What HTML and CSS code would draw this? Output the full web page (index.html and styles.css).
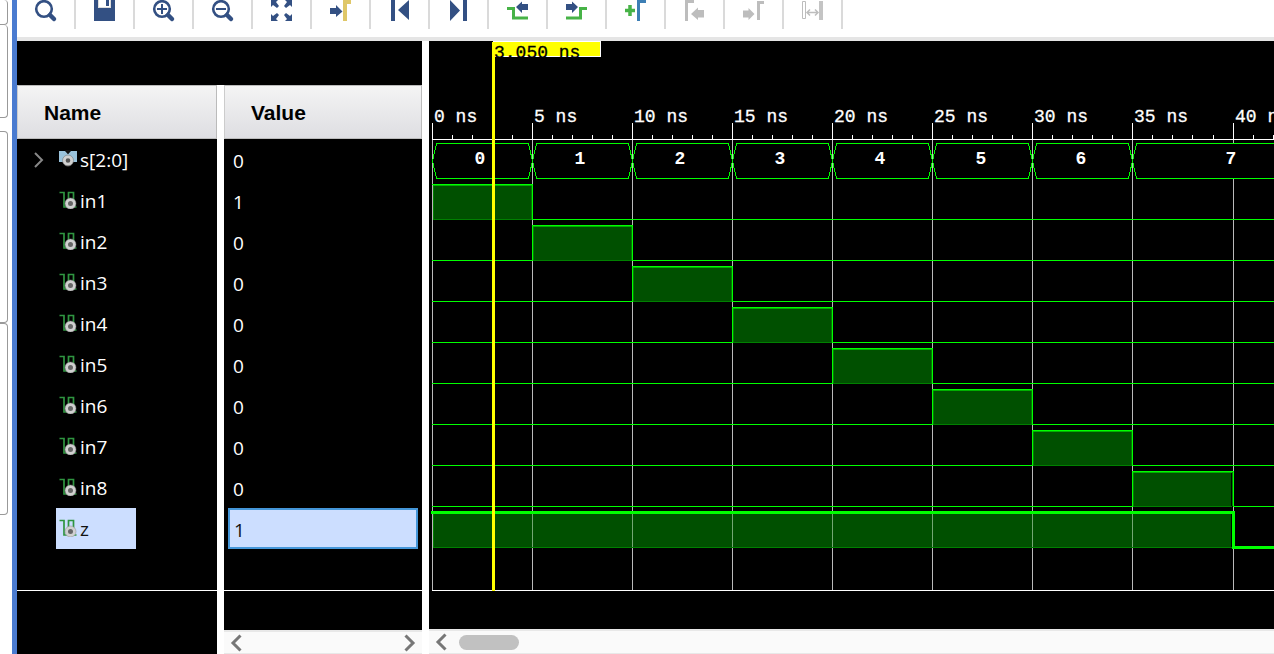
FILE: index.html
```html
<!DOCTYPE html>
<html lang="en">
<head>
<meta charset="utf-8">
<title>Waveform viewer</title>
<link rel="stylesheet" href="styles.css">
</head>
<body>
<svg class="defs" aria-hidden="true">
  <symbol id="bit" viewBox="0 0 18 18">
    <path d="M.5 1.500H5v14.500h4.500v-14.500h5v14.500h3" fill="none" stroke="#2f9540" stroke-width="1.700"/>
    <circle cx="11.500" cy="12.500" r="4" fill="#666" stroke="#d0d0d0" stroke-width="3"/>
    <circle cx="11.500" cy="12.500" r="5.500" fill="none" stroke="#888" stroke-width=".5"/>
  </symbol>
  <symbol id="bus" viewBox="0 0 18 18">
    <path d="M0 1h6l3 3 3-3h6v11H0z" fill="#9ac3dc"/>
    <path d="M6 0h6l-3 4z" fill="#111"/>
    <circle cx="9" cy="10.500" r="3.800" fill="#555" stroke="#d0d0d0" stroke-width="3"/>
    <circle cx="9" cy="10.500" r="5.500" fill="none" stroke="#888" stroke-width=".7"/>
  </symbol>
  <symbol id="left" viewBox="0 0 12 18"><path d="M10.500 1.500L3 9l7.500 7.500" fill="none" stroke="#777" stroke-width="3"/></symbol>
  <symbol id="right" viewBox="0 0 12 18"><path d="M1.500 1.500L9 9l-7.500 7.500" fill="none" stroke="#777" stroke-width="3"/></symbol>
</svg>
<div class="app">
  <aside class="dock">
    <div class="tab tab-first"></div>
    <div class="tab tab-short"></div>
    <div class="tab tab-group"></div>
    <div class="tab"></div>
  </aside>
  <main class="viewer">
    <div class="toolbar" role="toolbar">
      <button class="tool" aria-label="Search"><svg viewBox="0 0 57 29"><circle cx="27" cy="9" r="7.800" fill="none" stroke="#335083" stroke-width="2.600"/><path d="M33 15l4 4" stroke="#335083" stroke-width="4.500" stroke-linecap="round"/></svg></button>
      <button class="tool" aria-label="Save"><svg viewBox="0 0 57 29"><path d="M18 0h21v21H18z" fill="#335083"/><path d="M22 0h13v8H22z" fill="#ddd"/><path d="M23 0h11v7H23z" fill="#fff"/><path d="M30 0h3v6h-3z" fill="#335083"/></svg></button>
      <button class="tool" aria-label="Zoom in"><svg viewBox="0 0 57 29"><circle cx="27" cy="9" r="7.800" fill="none" stroke="#335083" stroke-width="2.600"/><path d="M33 15l4 4" stroke="#335083" stroke-width="4.500" stroke-linecap="round"/><path d="M22 9h10M27 4v10" stroke="#335083" stroke-width="2"/></svg></button>
      <button class="tool" aria-label="Zoom out"><svg viewBox="0 0 57 29"><circle cx="27" cy="9" r="7.800" fill="none" stroke="#335083" stroke-width="2.600"/><path d="M33 15l4 4" stroke="#335083" stroke-width="4.500" stroke-linecap="round"/><path d="M22 9h10" stroke="#335083" stroke-width="2"/></svg></button>
      <button class="tool" aria-label="Zoom fit"><svg viewBox="0 0 57 29"><path d="M18 0h7l-2 2 3 4-2 2-4-3-2 2zM39 0h-7l2 2-3 4 2 2 4-3 2 2zM18 21h7l-2-2 3-4-2-2-4 3-2-2zM39 21h-7l2-2-3-4 2-2 4 3 2-2z" fill="#335083"/></svg></button>
      <button class="tool" aria-label="Go to cursor"><svg viewBox="0 0 57 29"><path d="M18 8h6V5l6.500 6.500L24 17v-3h-6z" fill="#335083"/><path d="M31 0h8v4h-4v17h-4z" fill="#dfc768"/></svg></button>
      <button class="tool" aria-label="Go to start"><svg viewBox="0 0 57 29"><path d="M20 0h4v21h-4zM38 0v20L27 10z" fill="#335083"/></svg></button>
      <button class="tool" aria-label="Go to end"><svg viewBox="0 0 57 29"><path d="M33 0h4v21h-4zM20 0v21l10-10.500z" fill="#335083"/></svg></button>
      <button class="tool" aria-label="Previous transition"><svg viewBox="0 0 57 29"><path d="M18 8.500h6.500V18H39" fill="none" stroke="#47b347" stroke-width="3"/><path d="M39 4h-6V1.500L27 7l6 6v-3h6z" fill="#335083"/></svg></button>
      <button class="tool" aria-label="Next transition"><svg viewBox="0 0 57 29"><path d="M18 18h14.500V8.500H39" fill="none" stroke="#47b347" stroke-width="3"/><path d="M18 4h6V1.500L30 7l-6 6v-3h-6z" fill="#335083"/></svg></button>
      <button class="tool" aria-label="Add marker"><svg viewBox="0 0 57 29"><path d="M18 10.500h10M23 5v11" stroke="#47b347" stroke-width="3.500"/><path d="M30 0h9v3h-6v18h-3z" fill="#3d7fb5"/></svg></button>
      <button class="tool" aria-label="Previous marker" disabled><svg viewBox="0 0 57 29"><path d="M19 0h9v3h-6v18h-3zM38 10h-6V7.500L25 14l7 6v-2.500h6z" fill="#bdbdbd"/></svg></button>
      <button class="tool" aria-label="Next marker" disabled><svg viewBox="0 0 57 29"><path d="M32 1h7v3h-4v16h-3zM18 10.500h5.500V8l6 6-6 6v-2.500H18z" fill="#bdbdbd"/></svg></button>
      <button class="tool" aria-label="Swap cursors" disabled><svg viewBox="0 0 57 29"><path d="M18.500 1.500h3v17h-3z" fill="none" stroke="#bdbdbd"/><path d="M35 1h4v19h-4z" fill="#c4c4c4"/><path d="M23 12.500h11M26 9.500l-3 3 3 3M31 9.500l3 3-3 3" fill="none" stroke="#bdbdbd" stroke-width="1.500"/></svg></button>
    </div>
    <div class="panes">
      <section class="pane names">
        <div class="spacer"></div>
        <table class="signals">
          <thead><tr><th scope="col">Name</th></tr></thead>
          <tbody>
            <tr><td><div class="signal"><button class="expand" aria-label="Expand s"><svg viewBox="0 0 10 16"><path d="M1 1l7 7-7 7" fill="none" stroke="#888" stroke-width="2"/></svg></button><span class="tag"><svg class="kind"><use href="#bus"/></svg>s[2:0]</span></div></td></tr>
            <tr><td><div class="signal"><span class="tag"><svg class="kind"><use href="#bit"/></svg>in1</span></div></td></tr>
            <tr><td><div class="signal"><span class="tag"><svg class="kind"><use href="#bit"/></svg>in2</span></div></td></tr>
            <tr><td><div class="signal"><span class="tag"><svg class="kind"><use href="#bit"/></svg>in3</span></div></td></tr>
            <tr><td><div class="signal"><span class="tag"><svg class="kind"><use href="#bit"/></svg>in4</span></div></td></tr>
            <tr><td><div class="signal"><span class="tag"><svg class="kind"><use href="#bit"/></svg>in5</span></div></td></tr>
            <tr><td><div class="signal"><span class="tag"><svg class="kind"><use href="#bit"/></svg>in6</span></div></td></tr>
            <tr><td><div class="signal"><span class="tag"><svg class="kind"><use href="#bit"/></svg>in7</span></div></td></tr>
            <tr><td><div class="signal"><span class="tag"><svg class="kind"><use href="#bit"/></svg>in8</span></div></td></tr>
            <tr><td><div class="signal"><span class="tag selected"><svg class="kind"><use href="#bit"/></svg>z</span></div></td></tr>
          </tbody>
        </table>
        <div class="rule"></div>
      </section>
      <div class="divider"></div>
      <section class="pane values">
        <div class="spacer"></div>
        <table class="signals">
          <thead><tr><th scope="col">Value</th></tr></thead>
          <tbody>
            <tr><td><div class="value">0</div></td></tr>
            <tr><td><div class="value">1</div></td></tr>
            <tr><td><div class="value">0</div></td></tr>
            <tr><td><div class="value">0</div></td></tr>
            <tr><td><div class="value">0</div></td></tr>
            <tr><td><div class="value">0</div></td></tr>
            <tr><td><div class="value">0</div></td></tr>
            <tr><td><div class="value">0</div></td></tr>
            <tr><td><div class="value">0</div></td></tr>
            <tr><td><div class="value current">1</div></td></tr>
          </tbody>
        </table>
        <div class="rule"></div>
        <div class="scroll">
          <button class="arrow" aria-label="Scroll values left"><svg><use href="#left"/></svg></button>
          <button class="arrow" aria-label="Scroll values right"><svg><use href="#right"/></svg></button>
        </div>
      </section>
      <div class="divider full"></div>
      <section class="waves">
        <div class="canvas">
        <svg class="plot" width="2400" height="588">
          <g transform="translate(-429 -41)" shape-rendering="crispEdges">
            <path class="grid" d="M432.500 140v450M532.500 140v450M632.500 140v450M732.500 140v450M832.500 140v450M932.500 140v450M1032.500 140v450M1132.500 140v450M1233.500 140v450"/>
            <path class="fill" d="M433 185h99v34h-99zM533 226h99v34h-99zM633 267h99v34h-99zM733 308h99v34h-99zM833 349h99v34h-99zM933 390h99v34h-99zM1033 431h99v34h-99zM1133 472h98v34h-98z"/>
            <path class="fill" d="M433 514h798v33H433z"/>
            <path class="grid-over" d="M532.500 514v34M632.500 514v34M732.500 514v34M832.500 514v34M932.500 514v34M1032.500 514v34M1132.500 514v34"/>
            <path class="base" d="M433 219.500h99M533 260.500h99M633 301.500h99M733 342.500h99M833 383.500h99M933 424.500h99M1033 465.500h99M1133 506.500h99M433 547.500h799M433.500 185v34M531.500 185v34M533.500 226v34M631.500 226v34M633.500 267v34M731.500 267v34M733.500 308v34M831.500 308v34M833.500 349v34M931.500 349v34M933.500 390v34M1031.500 390v34M1033.500 431v34M1131.500 431v34M1133.500 472v34M1232.500 472v34M433.500 514v33"/>
            <path class="edge" d="M433 185.500h99M533 226.500h99M633 267.500h99M733 308.500h99M833 349.500h99M933 390.500h99M1033 431.500h99M1133 472.500h99"/>
            <path class="hidden-grid" d="M1233 143h1v36h-1z"/>
            <path class="wave" d="M432.500 161l4-17.500h92l4 17.500-4 17.500h-92zM532.500 161l4-17.500h92l4 17.500-4 17.500h-92zM632.500 161l4-17.500h92l4 17.500-4 17.500h-92zM732.500 161l4-17.500h92l4 17.500-4 17.500h-92zM832.500 161l4-17.500h92l4 17.500-4 17.500h-92zM932.500 161l4-17.500h92l4 17.500-4 17.500h-92zM1032.500 161l4-17.500h92l4 17.500-4 17.500h-92zM2900 143.500H1136.500l-4 17.500 4 17.500H2900"/>
            <path class="wave" d="M432 184.500h100.500v35H2900M432 260.500h100.500v-35h100v35H2900M432 301.500h200.500v-35h100v35H2900M432 342.500h300.500v-35h100v35H2900M432 383.500h400.500v-35h100v35H2900M432 424.500h500.500v-35h100v35H2900M432 465.500h600.500v-35h100v35H2900M432 506.500h700.500v-35h101v35H2900"/>
            <path class="wave active" d="M431 512.500h802.500v35H2900"/>
            <path class="axis" d="M432 139.500H2900M432 590.500H2900M432.500 123v16M532.500 123v16M632.500 123v16M732.500 123v16M832.500 123v16M932.500 123v16M1032.500 123v16M1132.500 123v16M1233.500 123v16"/>
            <path class="axis" d="M452.500 135v4m20-4v4m20-4v4m20-4v4m40-4v4m20-4v4m20-4v4m20-4v4m40-4v4m20-4v4m20-4v4m20-4v4m40-4v4m20-4v4m20-4v4m20-4v4m40-4v4m20-4v4m20-4v4m20-4v4m40-4v4m20-4v4m20-4v4m20-4v4m40-4v4m20-4v4m20-4v4m20-4v4m40-4v4m20-4v4m20-4v4m21-4v4m40-4v4m20-4v4"/>
            <g class="label">
              <text x="434" y="122">0 ns</text><text x="534" y="122">5 ns</text><text x="634" y="122">10 ns</text><text x="734" y="122">15 ns</text><text x="834" y="122">20 ns</text><text x="934" y="122">25 ns</text><text x="1034" y="122">30 ns</text><text x="1134" y="122">35 ns</text><text x="1235" y="122">40 ns</text>
            </g>
            <g class="label state">
              <text x="480" y="164">0</text><text x="580" y="164">1</text><text x="680" y="164">2</text><text x="780" y="164">3</text><text x="880" y="164">4</text><text x="981" y="164">5</text><text x="1081" y="164">6</text><text x="1231" y="164">7</text>
            </g>
            <path d="M493 41h108v16H493z" fill="#fff"/>
            <path d="M492 42h108v14H492zM492 42h3v549h-3z" fill="#ff0"/>
            <text class="label time" x="494" y="58">3.050 ns</text>
          </g>
        </svg>
        </div>
        <div class="scroll wide">
          <button class="arrow" aria-label="Scroll waveform left"><svg><use href="#left"/></svg></button>
          <div class="thumb"></div>
        </div>
      </section>
    </div>
  </main>
</div>
</body>
</html>
```
FILE: styles.css
```css
* { box-sizing: border-box; }
body { margin: 0; background: #fff; font-family: "Open Sans", "Noto Sans", sans-serif; font-size: 19px; overflow: hidden; }
button { padding: 0; border: 0; background: none; }
.defs { position: absolute; width: 0; height: 0; }
.app { display: flex; height: 100vh; }

.dock { flex: 0 0 12px; padding-right: 4px; overflow: hidden; }
.tab { height: 192px; border: 1px solid #999; border-left: 0; border-radius: 0 4px 4px 0; }
.tab-first { height: 25px; border-top: 0; }
.tab-short { height: 93px; border-top: 0; }
.tab-group { margin-top: 13px; }

.viewer { flex: 1; min-width: 0; display: flex; flex-direction: column; border-left: 5px solid #4a7bd0; }
.toolbar { display: flex; flex: none; height: 41px; border-bottom: 4px solid #e5e5e5; }
.tool { flex: 0 0 59px; height: 29px; border-right: 2px solid #dadada; }
.tool svg { display: block; width: 57px; height: 29px; }

.panes { flex: 1; min-height: 0; display: flex; background: #000; }
.pane { display: flex; flex-direction: column; color: #fff; }
.names { flex: 0 0 200px; }
.values { flex: 0 0 198px; }
.divider { flex: 0 0 7px; margin-top: 44px; background: #fff; }
.divider.full { margin-top: 0; }
.spacer { height: 44px; flex: none; }
.signals { width: 100%; border-collapse: separate; border-spacing: 0; }
.signals th { height: 54px; padding: 2px 26px 0; border: 1px solid #bbb; border-left-color: #ccc; background: linear-gradient(#f4f4f4, #dedee2); color: #000; text-align: left; font: bold 21px "Liberation Sans", Arial, sans-serif; }
.signals td { height: 41px; padding: 0; }
.signal { display: flex; align-items: center; height: 41px; padding-left: 39px; position: relative; }
.tag { display: flex; align-items: center; gap: 3px; min-width: 80px; height: 41px; padding: 1px 0 0 3px; }
.kind { width: 18px; height: 18px; margin-bottom: 3px; }
.selected { background: #ccdeff; color: #111; }
.expand { position: absolute; left: 17px; width: 10px; height: 16px; }
.expand svg { display: block; width: 10px; height: 16px; }
.value { height: 41px; padding-left: 9px; line-height: 44px; }
.current { margin: 0 4px; padding-left: 4px; border: 2px solid #4496d8; background: #ccdeff; color: #111; line-height: 40px; }
.rule { margin-top: 41px; height: 1px; flex: none; background: #fff; }

.scroll { display: flex; align-items: center; justify-content: space-between; flex: none; height: 24px; margin-top: auto; padding: 0 6px; border-top: 2px solid #e8e8e8; border-bottom: 1px solid #e8e8e8; background: #fafafa; }
.arrow, .arrow svg { display: block; width: 12px; height: 18px; }
.wide { height: 25px; justify-content: flex-start; gap: 12px; }
.thumb { width: 60px; height: 15px; border-radius: 8px; background: #c1c1c1; }

.waves { flex: 1; min-width: 0; display: flex; flex-direction: column; }
.canvas { flex: 1; min-height: 0; overflow: hidden; }
.plot { display: block; }
.grid { stroke: #bababa; fill: none; }
.grid-over { stroke: #74a874; fill: none; }
.fill { fill: #005000; }
.base { stroke: #008000; fill: none; }
.edge { stroke: #00b000; fill: none; }
.hidden-grid { fill: #000; }
.wave { stroke: #0f0; fill: none; }
.active { stroke-width: 3px; }
.axis { stroke: #fff; fill: none; }
.label { font: 18px "Liberation Mono", "Courier New", monospace; fill: #fff; stroke: #fff; stroke-width: .3px; }
.state { text-anchor: middle; font-weight: bold; stroke: none; }
.time { fill: #000; stroke: #000; }
```
